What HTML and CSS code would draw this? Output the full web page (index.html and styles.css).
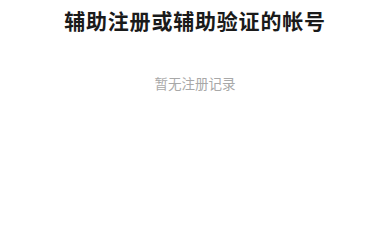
FILE: index.html
```html
<!DOCTYPE html>
<html lang="zh-CN">
<head>
    <meta charset="UTF-8">
    <meta name="viewport" content="width=device-width, initial-scale=1.0">
    <title>辅助帐号</title>
    <link rel="stylesheet" href="styles.css">
</head>
<body>
    <div class="page">
        <h1 class="title">辅助注册或辅助验证的帐号</h1>
        <p class="empty">暂无注册记录</p>
    </div>
</body>
</html>
```

FILE: styles.css
```css
body{
    margin: 0;
    background-color: #fff;
    font-family: "Noto Sans CJK SC", "Noto Sans", sans-serif;
}
.page{
    display: flex;
    flex-direction: column;
    align-items: center;
}
.title{
    margin: 5px 0 0;
    font-size: 21px;
    line-height: 30px;
    font-weight: bold;
    color: #1a1a1a;
    letter-spacing: 0.8px;
}
.empty{
    margin: 38px 0 0;
    font-size: 13.5px;
    line-height: 20px;
    color: #a8a8a8;
}
```
